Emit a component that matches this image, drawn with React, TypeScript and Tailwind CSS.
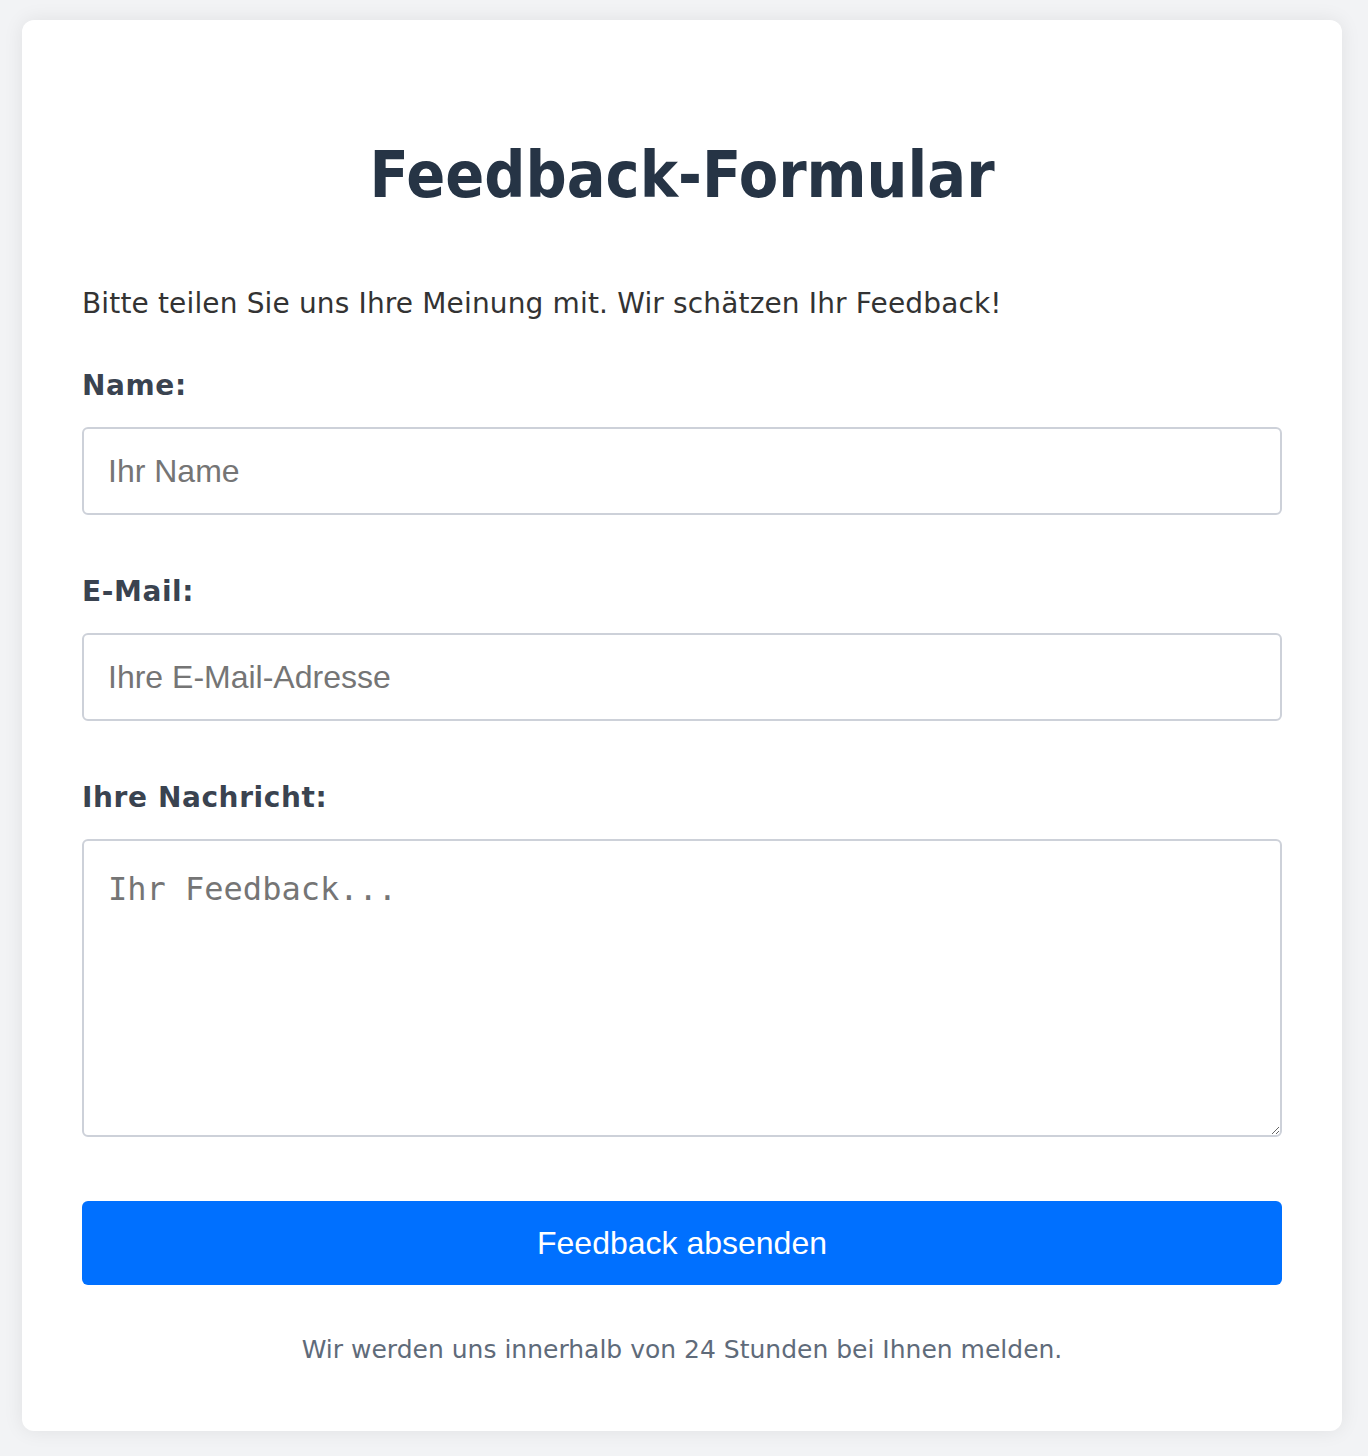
import React from "react";

export default function App() {
  const sans = { fontFamily: '"DejaVu Sans", Verdana, sans-serif' };
  const arial = { fontFamily: '"Liberation Sans", Arial, sans-serif' };
  return (
    <div className="min-h-[1456px] bg-[#f2f3f5] pl-[22px] pr-[26px] pt-[20px] pb-[25px]" style={sans}>
      <div className="bg-white rounded-[12px] shadow-[0_0_20px_rgba(0,0,0,0.08)] px-[60px] pt-[60px] pb-[65px]">
        <h1
          className="text-center text-[64px] font-bold leading-[76px] text-[#263445] mt-[57px]"
          style={{ fontFamily: '"DejaVu Sans Condensed", "DejaVu Sans", sans-serif' }}
        >
          Feedback-Formular
        </h1>
        <p className="text-[28px] text-[#333] mt-[73px] leading-[36px] tracking-[0.15px]">
          Bitte teilen Sie uns Ihre Meinung mit. Wir schätzen Ihr Feedback!
        </p>
        <form className="mt-[46px] flex flex-col">
          <label className="text-[28px] font-bold text-[#3a4350] leading-[36px] tracking-[0.6px]">Name:</label>
          <input
            type="text"
            placeholder="Ihr Name"
            className="mt-[23px] h-[88px] w-full rounded-[6px] border-2 border-[#cdd1d9] px-[24px] text-[32px] text-[#333] placeholder:text-[#757575] outline-none"
            style={arial}
          />
          <label className="mt-[59px] text-[28px] font-bold text-[#3a4350] leading-[36px] tracking-[0.6px]">E-Mail:</label>
          <input
            type="email"
            placeholder="Ihre E-Mail-Adresse"
            className="mt-[23px] h-[88px] w-full rounded-[6px] border-2 border-[#cdd1d9] px-[24px] text-[32px] text-[#333] placeholder:text-[#757575] outline-none"
            style={arial}
          />
          <label className="mt-[59px] text-[28px] font-bold text-[#3a4350] leading-[36px] tracking-[0.6px]">Ihre Nachricht:</label>
          <textarea
            placeholder="Ihr Feedback..."
            className="mt-[23px] block h-[298px] w-full rounded-[6px] border-2 border-[#cdd1d9] px-[24px] py-[24px] text-[32px] leading-normal text-[#333] placeholder:text-[#757575] outline-none"
            style={{ fontFamily: '"DejaVu Sans Mono", monospace' }}
          />
          <button
            type="button"
            className="mt-[64px] h-[84px] w-full rounded-[6px] bg-[#0070ff] text-white text-[32px]"
            style={arial}
          >
            Feedback absenden
          </button>
        </form>
        <p className="mt-[49px] text-center text-[25px] text-[#5f6b7a] leading-[32px]">
          Wir werden uns innerhalb von 24 Stunden bei Ihnen melden.
        </p>
      </div>
    </div>
  );
}
